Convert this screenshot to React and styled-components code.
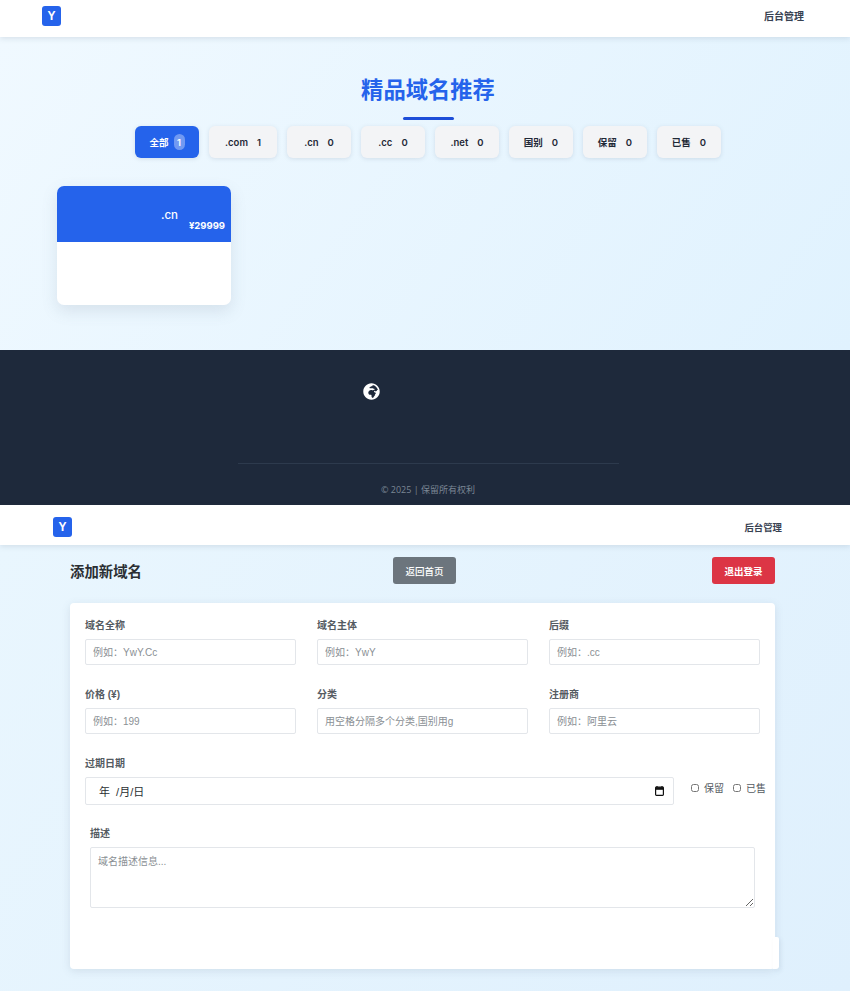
import styled, { createGlobalStyle } from "styled-components";
import { FaGlobeAfrica } from "react-icons/fa";

const CJK = `"Noto Sans CJK SC", sans-serif`;
const FONT_UI = `"Inter", "Noto Sans CJK SC", sans-serif`;
const FONT_FORM = `"Liberation Sans", "Noto Sans CJK SC", sans-serif`;

const GlobalStyle = createGlobalStyle`
    * { box-sizing: border-box; }
    body {
        margin: 0;
        background: #e4f3fd;
        font-family: ${FONT_UI};
    }
`

const Page = styled.div`
    width: 850px;
`

const Header = styled.header`
    display: flex;
    align-items: center;
    justify-content: space-between;
    height: ${props => props.$height}px;
    padding: ${props => props.$top}px ${props => props.$right}px ${props => props.$bottom}px ${props => props.$left}px;
    background: #fff;
    box-shadow: 0 2px 5px rgba(100, 116, 139, 0.16);
    position: relative;
`

const Logo = styled.div`
    display: flex;
    align-items: center;
    justify-content: center;
    width: 19px;
    height: 20px;
    border-radius: 3px;
    background: #2563eb;
    color: #fff;
    font: 700 12px "Liberation Sans", sans-serif;
`

const AdminLink = styled.a`
    font: 700 ${props => props.$size}px ${CJK};
    color: #374151;
`

const Hero = styled.main`
    display: flex;
    flex-direction: column;
    height: 313px;
    padding: 37px 0 0 6px;
    background: linear-gradient(125deg, #f0f9ff 0%, #e0f2fe 100%);
`

const Title = styled.h1`
    margin: 0;
    text-align: center;
    font: 700 22.3px/28px ${CJK};
    color: #2563eb;
`

const TitleRule = styled.div`
    width: 51px;
    height: 3px;
    margin: 15px auto 6px;
    border-radius: 2px;
    background: #1d4ed8;
`

const Tabs = styled.div`
    display: flex;
    justify-content: center;
    gap: 10px;
`

const Tab = styled.button`
    display: flex;
    align-items: center;
    justify-content: center;
    gap: ${props => props.$active ? 5 : 9}px;
    width: ${props => props.$wide ? 68 : 64}px;
    height: 32px;
    padding: 0;
    border: 0;
    border-radius: 6px;
    background: ${props => props.$active ? "#2563eb" : "#f3f4f6"};
    color: ${props => props.$active ? "#fff" : "#1f2937"};
    box-shadow: 0 1px 4px rgba(100, 116, 139, 0.18);
    font: 600 9.5px ${FONT_UI};
`

const Count = styled.span`
    ${props => props.$active && `
        display: flex;
        align-items: center;
        justify-content: center;
        width: 11px;
        height: 16px;
        border-radius: 6px;
        background: rgba(255, 255, 255, 0.35);
    `}
`

const Cards = styled.div`
    padding: 28px 0 0 51px;
`

const Card = styled.article`
    width: 174px;
    height: 119px;
    border-radius: 7px;
    overflow: hidden;
    background: #fff;
    box-shadow: 0 6px 16px rgba(100, 116, 139, 0.16);
`

const CardHead = styled.div`
    display: flex;
    flex-direction: column;
    align-items: flex-end;
    height: 56px;
    padding: 21px 6px 0 0;
    background: #2563eb;
    color: #fff;
`

const Suffix = styled.span`
    margin-right: 47px;
    font: 500 11.5px/16px ${FONT_UI};
`

const Price = styled.span`
    margin-top: -4px;
    font: 700 9.5px/14px ${FONT_UI};
`

const Footer = styled.footer`
    height: 155px;
    padding: 33px 0 0 6px;
    background: #1e293b;
`

const FooterIcon = styled.div`
    display: flex;
    margin-left: 357px;
    color: #fff;
    font-size: 17px;
`

const FooterRule = styled.div`
    width: 381px;
    height: 1px;
    margin: 63px auto 0;
    background: #2d3a4d;
`

const Copyright = styled.p`
    margin: 19px 0 0;
    text-align: center;
    font: 400 9px/14px "Open Sans", ${CJK};
    color: #7b8694;
`

const Admin = styled.section`
    height: 446px;
    padding: 12px 75px 0 70px;
    background: linear-gradient(125deg, #e9f6fe 0%, #dff0fd 100%);
`

const Toolbar = styled.div`
    display: flex;
    align-items: center;
    justify-content: space-between;
    height: 27px;
`

const FormTitle = styled.h2`
    flex: 0 0 323px;
    margin: 0;
    font: 700 14.4px ${CJK};
    color: #2b2f33;
`

const ActionButton = styled.button`
    width: 63px;
    height: 27px;
    padding: 0;
    border: 0;
    border-radius: 3px;
    background: ${props => props.$danger ? "#dc3545" : "#6c757d"};
    color: #fff;
    font: ${props => props.$danger ? 700 : 500} 9.5px ${CJK};
`

const ToolbarSpacer = styled.div`
    flex: 1;
`

const FormCard = styled.form`
    position: relative;
    height: 366px;
    margin-top: 19px;
    padding: 16px 15px 0;
    border-radius: 4px;
    background: #fff;
    box-shadow: 0 2px 8px rgba(100, 116, 139, 0.16);

    &::after {
        content: "";
        position: absolute;
        right: -4px;
        bottom: 0;
        width: 6px;
        height: 32px;
        border-radius: 0 2px 3px 0;
        background: #fff;
        box-shadow: 2px 2px 4px rgba(100, 116, 139, 0.1);
    }
`

const FieldGrid = styled.div`
    display: grid;
    grid-template-columns: repeat(3, 211px);
    gap: 23px 21px;
`

const Field = styled.div`
    display: flex;
    flex-direction: column;
    gap: 6px;
`

const Label = styled.label`
    font: 700 10px/14px ${FONT_FORM};
    color: #555b62;
`

const Input = styled.input`
    width: 100%;
    height: 26px;
    padding: 0 7px;
    border: 1px solid #e3e6ea;
    border-radius: 2px;
    background: #fff;
    font: 400 10px ${FONT_FORM};
    color: #333;

    &::placeholder {
        color: #8a8f94;
        opacity: 1;
    }
`

const DateRow = styled.div`
    display: flex;
    align-items: flex-start;
    gap: 17px;
    margin-top: 23px;
`

const DateField = styled(Field)`
    flex: 0 0 589px;
`

const DateInput = styled.div`
    display: flex;
    align-items: center;
    justify-content: space-between;
    height: 28px;
    padding: 0 9px 0 13px;
    border: 1px solid #e3e6ea;
    border-radius: 2px;
    font: 400 11px ${FONT_FORM};
    color: #2b2f33;
`

const Flags = styled.div`
    display: flex;
    flex: none;
    gap: 9px;
    margin-top: 24px;
`

const Flag = styled.label`
    display: flex;
    align-items: center;
    gap: 5px;
    white-space: nowrap;
    font: 400 10px/14px ${CJK};
    color: #555b62;
`

const Checkbox = styled.input`
    width: 8px;
    height: 8px;
    margin: 0;
`

const DescField = styled(Field)`
    margin: 22px 5px 0;
`

const TextArea = styled.textarea`
    width: 100%;
    height: 61px;
    padding: 7px 7px;
    border: 1px solid #e3e6ea;
    border-radius: 2px;
    font: 400 10px/14px ${FONT_FORM};

    &::placeholder {
        color: #8a8f94;
        opacity: 1;
    }
`

const tabs = [
    { label: "全部", count: 1, active: true },
    { label: ".com", count: 1, wide: true },
    { label: ".cn", count: 0 },
    { label: ".cc", count: 0 },
    { label: ".net", count: 0 },
    { label: "国别", count: 0 },
    { label: "保留", count: 0 },
    { label: "已售", count: 0 },
];

const fields = [
    { label: "域名全称", placeholder: "例如：YwY.Cc" },
    { label: "域名主体", placeholder: "例如：YwY" },
    { label: "后缀", placeholder: "例如：.cc" },
    { label: "价格 (¥)", placeholder: "例如：199" },
    { label: "分类", placeholder: "用空格分隔多个分类,国别用g" },
    { label: "注册商", placeholder: "例如：阿里云" },
];

function CalendarIcon() {
    return (
        <svg width="9" height="10" viewBox="0 0 9 10" fill="none">
            <path d="M2 0v1.5M7 0v1.5" stroke="#111" strokeWidth="1.2" />
            <rect x="0.6" y="1.2" width="7.8" height="8.2" rx="0.8" stroke="#111" strokeWidth="1.2" />
            <rect x="0.6" y="1.2" width="7.8" height="2.6" fill="#111" />
        </svg>
    );
}

export default function App() {
    return (
        <Page>
            <GlobalStyle />
            <Header $height={37} $top={0} $bottom={6} $left={42} $right={46}>
                <Logo>Y</Logo>
                <AdminLink $size={10}>后台管理</AdminLink>
            </Header>
            <Hero>
                <Title>精品域名推荐</Title>
                <TitleRule />
                <Tabs>
                    {tabs.map(tab => (
                        <Tab key={tab.label} $active={tab.active} $wide={tab.wide}>
                            {tab.label}
                            <Count $active={tab.active}>{tab.count}</Count>
                        </Tab>
                    ))}
                </Tabs>
                <Cards>
                    <Card>
                        <CardHead>
                            <Suffix>.cn</Suffix>
                            <Price>¥29999</Price>
                        </CardHead>
                    </Card>
                </Cards>
            </Hero>
            <Footer>
                <FooterIcon><FaGlobeAfrica /></FooterIcon>
                <FooterRule />
                <Copyright>© 2025 | 保留所有权利</Copyright>
            </Footer>
            <Header $height={40} $top={4} $bottom={0} $left={53} $right={68}>
                <Logo>Y</Logo>
                <AdminLink $size={9.4}>后台管理</AdminLink>
            </Header>
            <Admin>
                <Toolbar>
                    <FormTitle>添加新域名</FormTitle>
                    <ActionButton type="button">返回首页</ActionButton>
                    <ToolbarSpacer />
                    <ActionButton type="button" $danger>退出登录</ActionButton>
                </Toolbar>
                <FormCard>
                    <FieldGrid>
                        {fields.map(field => (
                            <Field key={field.label}>
                                <Label>{field.label}</Label>
                                <Input placeholder={field.placeholder} />
                            </Field>
                        ))}
                    </FieldGrid>
                    <DateRow>
                        <DateField>
                            <Label>过期日期</Label>
                            <DateInput>
                                <span>年 &nbsp;/月/日</span>
                                <CalendarIcon />
                            </DateInput>
                        </DateField>
                        <Flags>
                            <Flag><Checkbox type="checkbox" />保留</Flag>
                            <Flag><Checkbox type="checkbox" />已售</Flag>
                        </Flags>
                    </DateRow>
                    <DescField>
                        <Label>描述</Label>
                        <TextArea placeholder="域名描述信息..." />
                    </DescField>
                </FormCard>
            </Admin>
        </Page>
    );
}
